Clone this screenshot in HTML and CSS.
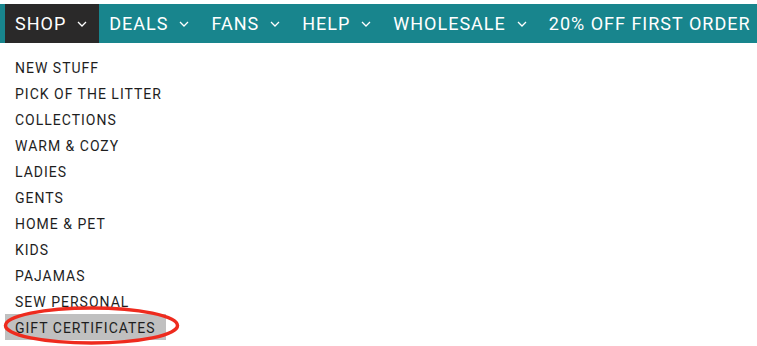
FILE: index.html
```html
<!DOCTYPE html>
<html lang="en">
<head>
    <meta charset="UTF-8">
    <title>Shop menu</title>
    <link rel="stylesheet" href="styles.css">
</head>
<body>
    <nav class="topnav">
        <a class="nav-item active" href="#">SHOP <svg class="chev" viewBox="0 0 10 6"><polyline points="1,1 5,5 9,1"/></svg></a>
        <a class="nav-item" href="#">DEALS <svg class="chev" viewBox="0 0 10 6"><polyline points="1,1 5,5 9,1"/></svg></a>
        <a class="nav-item" href="#">FANS <svg class="chev" viewBox="0 0 10 6"><polyline points="1,1 5,5 9,1"/></svg></a>
        <a class="nav-item" href="#">HELP <svg class="chev" viewBox="0 0 10 6"><polyline points="1,1 5,5 9,1"/></svg></a>
        <a class="nav-item" href="#">WHOLESALE <svg class="chev" viewBox="0 0 10 6"><polyline points="1,1 5,5 9,1"/></svg></a>
        <a class="nav-item" href="#">20% OFF FIRST ORDER</a>
    </nav>

    <!-- dropdown of the shop tab -->
    <ul class="dropdown">
        <li><a href="#">NEW STUFF</a></li>
        <li><a href="#">PICK OF THE LITTER</a></li>
        <li><a href="#">COLLECTIONS</a></li>
        <li><a href="#">WARM &amp; COZY</a></li>
        <li><a href="#">LADIES</a></li>
        <li><a href="#">GENTS</a></li>
        <li><a href="#">HOME &amp; PET</a></li>
        <li><a href="#">KIDS</a></li>
        <li><a href="#">PAJAMAS</a></li>
        <li><a href="#">SEW PERSONAL</a></li>
        <li class="hover"><a href="#">GIFT CERTIFICATES</a></li>
    </ul>

    <svg class="circle-mark" viewBox="0 0 190 46">
        <ellipse cx="91.5" cy="19.5" rx="86" ry="17.5"/>
    </svg>
</body>
</html>
```

FILE: styles.css
```css
body {
    margin: 0;
    font-family: Roboto, "Liberation Sans", sans-serif;
    background: #fff;
    position: relative;
    height: 346px;
    overflow: hidden;
}
.topnav {
    display: flex;
    margin-top: 4px;
    padding-left: 5px;
    height: 39px;
    background: #18858d;
    white-space: nowrap;
}
.nav-item {
    display: flex;
    align-items: center;
    gap: 11px;
    padding: 0 12px 0 10px;
    color: #fff;
    text-decoration: none;
    font-size: 18px;
    letter-spacing: 1px;
}
.nav-item.active {
    background: #2a2929;
}
.chev {
    width: 10px;
    height: 6px;
    fill: none;
    stroke: #fff;
    stroke-width: 1.3;
}
.dropdown {
    list-style: none;
    margin: 0;
    padding: 11px 0 0 5px;
}
.dropdown li {
    width: 161px;
}
.dropdown a {
    display: block;
    height: 26px;
    line-height: 28px;
    padding-left: 10px;
    color: #1e1e1e;
    text-decoration: none;
    font-size: 14px;
    letter-spacing: 1px;
}
.dropdown .hover {
    background: #c0c0c0;
}
.circle-mark {
    position: absolute;
    left: 0;
    top: 306px;
    width: 190px;
    height: 46px;
    fill: none;
    stroke: #ee2b1e;
    stroke-width: 3.5;
}
```
